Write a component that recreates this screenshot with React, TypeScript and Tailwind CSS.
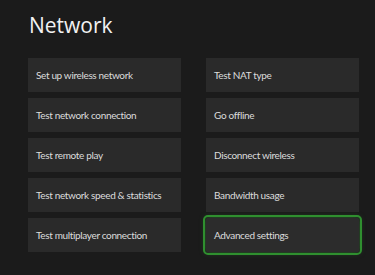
import React from 'react';

const leftItems = [
  'Set up wireless network',
  'Test network connection',
  'Test remote play',
  'Test network speed & statistics',
  'Test multiplayer connection',
];

const rightItems = [
  'Test NAT type',
  'Go offline',
  'Disconnect wireless',
  'Bandwidth usage',
  'Advanced settings',
];

const Tile: React.FC<{ label: string; focused?: boolean }> = ({ label, focused }) => (
  <div
    className={
      focused
        ? 'h-[34px] flex items-center px-2 bg-[#2c2c2c] rounded-[2px] outline-2 outline-offset-1 outline-[#2f8f2f] shadow-[0_0_6px_rgba(60,170,60,0.55)]'
        : 'h-[34px] flex items-center px-2 bg-[#2a2a2a]'
    }
  >
    <span
      className="text-[10px] tracking-[-0.35px] text-[#dcdcdc] whitespace-nowrap"
      style={{ fontFamily: 'Lato, "Noto Sans", sans-serif' }}
    >
      {label}
    </span>
  </div>
);

export default function App() {
  return (
    <div
      className="w-[375px] h-[275px] bg-[#1b1b1b] overflow-hidden pl-[28px] pr-[16px] pt-[10px]"
      style={{ fontFamily: '"Open Sans", "Noto Sans", sans-serif' }}
    >
      <h1 className="text-[21px] leading-[30px] text-[#f2f2f2] font-normal ml-[1px]">Network</h1>
      <div className="mt-[18px] grid grid-cols-[153px_153px] gap-x-[25px] gap-y-[6px]">
        {leftItems.map((l, i) => (
          <React.Fragment key={l}>
            <Tile label={l} />
            <Tile label={rightItems[i]} focused={i === 4} />
          </React.Fragment>
        ))}
      </div>
    </div>
  );
}
